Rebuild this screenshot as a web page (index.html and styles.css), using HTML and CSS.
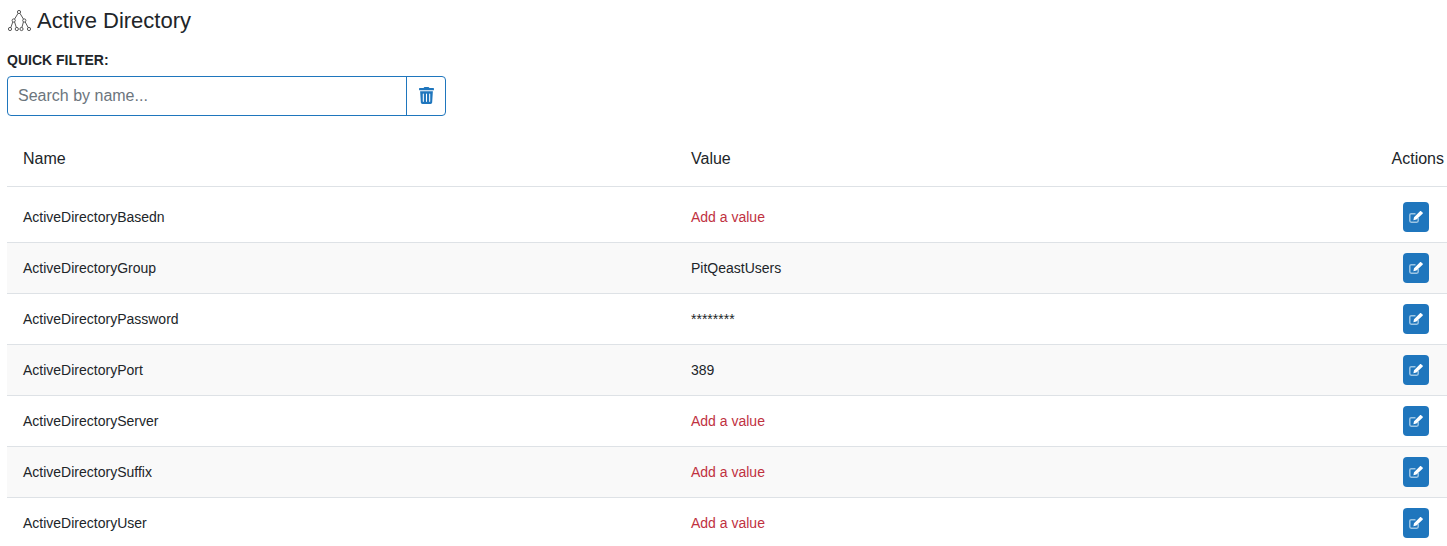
FILE: index.html
```html
<!DOCTYPE html>
<html lang="en">
<head>
<meta charset="utf-8">
<title>Active Directory</title>
<link rel="stylesheet" href="styles.css">
</head>
<body>
<svg class="defs" width="0" height="0" aria-hidden="true">
<symbol id="edit-icon" viewBox="0 0 14 12">
<path fill="none" stroke="#9cc5e4" stroke-width="1.500" d="M6.500 2.700H2.200A1.400 1.400 0 0 0 .8 4.100v5.700a1.400 1.400 0 0 0 1.400 1.400h5.600a1.400 1.400 0 0 0 1.400-1.400V7"/>
<path fill="#fff" d="M11 .2a.8.800 0 0 1 1.100 0l1.500 1.400a.8.800 0 0 1 0 1.100L7.400 8.600l-3 .6.600-3z"/>
</symbol>
</svg>
<h1 class="title">
<svg class="title-icon" width="24" height="24" viewBox="0 0 24 24" fill="none" stroke="#444" stroke-width=".9"><circle cx="12" cy="3" r="1.600"/><circle cx="6.700" cy="11.500" r="1.600"/><circle cx="17.300" cy="11.500" r="1.600"/><circle cx="3" cy="20" r="1.600"/><circle cx="9.800" cy="20" r="1.600"/><circle cx="14.500" cy="20" r="1.600"/><circle cx="22" cy="20" r="1.600"/><path d="M11 4.400 7.600 10M13 4.400l3.400 5.600M5.800 13 3.800 18.600M7.600 13l1.700 5.500M16.400 13l-1.500 5.500M18.200 13l3 5.600"/></svg>
<span>Active Directory</span>
</h1>
<label class="filter-label" for="q">QUICK FILTER:</label>
<div class="filter">
<input id="q" class="filter-input" type="text" placeholder="Search by name...">
<button class="filter-clear" type="button" aria-label="Clear">
<svg width="15" height="17" viewBox="0 0 448 512" fill="#1f76bd"><path d="M432 32H312l-9.400-18.700A24 24 0 0 0 281.100 0H166.800a23.700 23.700 0 0 0-21.400 13.300L136 32H16A16 16 0 0 0 0 48v32a16 16 0 0 0 16 16h416a16 16 0 0 0 16-16V48a16 16 0 0 0-16-16zM53.200 467a48 48 0 0 0 47.900 45h245.800a48 48 0 0 0 47.900-45L416 128H32zM144 208v224a16 16 0 0 1-32 0V208a16 16 0 0 1 32 0zm96 0v224a16 16 0 0 1-32 0V208a16 16 0 0 1 32 0zm96 0v224a16 16 0 0 1-32 0V208a16 16 0 0 1 32 0z"/></svg>
</button>
</div>
<table class="grid">
<thead>
<tr><th class="c-name">Name</th><th class="c-value">Value</th><th class="c-actions">Actions</th></tr>
</thead>
<tbody>
<tr><td>ActiveDirectoryBasedn</td><td class="empty">Add a value</td><td class="act"><button class="edit" type="button" aria-label="Edit"><svg class="edit-svg"><use href="#edit-icon"/></svg></button></td></tr>
<tr><td>ActiveDirectoryGroup</td><td>PitQeastUsers</td><td class="act"><button class="edit" type="button" aria-label="Edit"><svg class="edit-svg"><use href="#edit-icon"/></svg></button></td></tr>
<tr><td>ActiveDirectoryPassword</td><td>********</td><td class="act"><button class="edit" type="button" aria-label="Edit"><svg class="edit-svg"><use href="#edit-icon"/></svg></button></td></tr>
<tr><td>ActiveDirectoryPort</td><td>389</td><td class="act"><button class="edit" type="button" aria-label="Edit"><svg class="edit-svg"><use href="#edit-icon"/></svg></button></td></tr>
<tr><td>ActiveDirectoryServer</td><td class="empty">Add a value</td><td class="act"><button class="edit" type="button" aria-label="Edit"><svg class="edit-svg"><use href="#edit-icon"/></svg></button></td></tr>
<tr><td>ActiveDirectorySuffix</td><td class="empty">Add a value</td><td class="act"><button class="edit" type="button" aria-label="Edit"><svg class="edit-svg"><use href="#edit-icon"/></svg></button></td></tr>
<tr><td>ActiveDirectoryUser</td><td class="empty">Add a value</td><td class="act"><button class="edit" type="button" aria-label="Edit"><svg class="edit-svg"><use href="#edit-icon"/></svg></button></td></tr>
</tbody>
</table>
</body>
</html>
```
FILE: styles.css
```css
html, body { margin: 0; padding: 0; overflow: hidden; }
body {
  padding-left: 7px;
  height: 546px;
  font-family: "Liberation Sans", Arial, sans-serif;
  color: #212529;
  background: #fff;
}
.defs { position: absolute; }
.title {
  display: flex;
  align-items: center;
  gap: 6px;
  margin: 0;
  padding-top: 8px;
  height: 26px;
  font-size: 22px;
  font-weight: 400;
  line-height: 26px;
}
.title-icon { flex: none; }
.filter-label {
  display: block;
  margin-top: 18px;
  font-size: 14px;
  font-weight: 700;
  line-height: 16px;
}
.filter {
  display: flex;
  width: 439px;
  height: 40px;
  margin-top: 8px;
  box-sizing: border-box;
  border: 1px solid #1f76bd;
  border-radius: 4px;
}
.filter-input {
  flex: 1;
  min-width: 0;
  border: 0;
  outline: 0;
  padding: 0 10px;
  background: transparent;
  font: 16px "Liberation Sans", Arial, sans-serif;
  color: #495057;
}
.filter-input::placeholder { color: #6c757d; opacity: 1; }
.filter-clear {
  display: flex;
  align-items: center;
  justify-content: center;
  width: 39px;
  padding: 0 0 2px;
  border: 0;
  border-left: 1px solid #1f76bd;
  background: transparent;
}
.grid {
  width: 1440px;
  margin-top: 16px;
  border-collapse: collapse;
  table-layout: fixed;
  font-size: 14px;
}
.grid th {
  height: 54px;
  padding: 0 16px;
  font-size: 16px;
  font-weight: 400;
  text-align: left;
  border-bottom: 1px solid #dee2e6;
}
.grid .c-name { width: 636px; }
.grid .c-actions { width: 56px; padding: 0 3px 0 0; text-align: right; }
.grid td {
  height: 50px;
  padding: 0 16px;
  border-bottom: 1px solid #dee2e6;
}
.grid tbody tr:first-child td { height: 51px; padding-top: 4px; }
.grid tbody tr:nth-child(even) { background: #f9f9f9; }
.grid tbody tr:last-child td { border-bottom: 0; }
.grid .empty { color: #c0313f; }
.grid .act { padding-left: 0; padding-right: 18px; text-align: right; }
.edit {
  display: inline-flex;
  align-items: center;
  justify-content: center;
  width: 26px;
  height: 30px;
  padding: 0;
  border: 0;
  border-radius: 4px;
  background: #1f76bd;
  vertical-align: middle;
}
.edit-svg { width: 14px; height: 12px; }
```
